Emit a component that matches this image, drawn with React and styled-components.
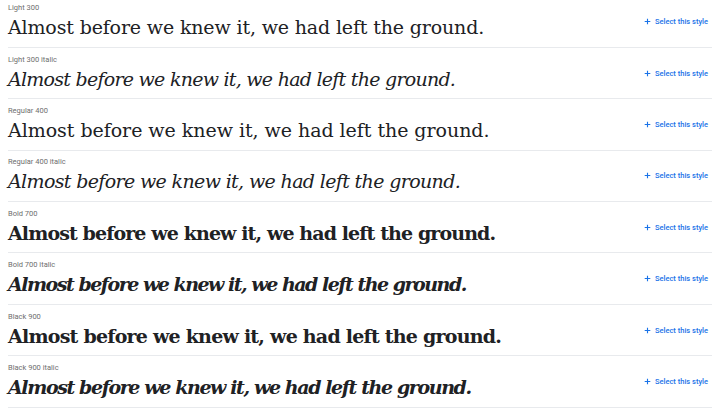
import React from 'react';
import styled, { createGlobalStyle } from 'styled-components';

const GlobalStyle = createGlobalStyle`
  body {
    margin: 0;
    background: #ffffff;
    font-family: Roboto, "Liberation Sans", sans-serif;
  }
`;

const List = styled.div`
  margin-top: -3.5px;
  padding: 0 8px;
`;

const Row = styled.div`
  display: flex;
  align-items: center;
  height: 51.4px;
  box-sizing: border-box;
  border-bottom: 1px solid #e8eaed;
`;

const Info = styled.div`
  flex: 1;
  min-width: 0;
  display: flex;
  flex-direction: column;
`;

const Label = styled.div`
  font-size: 7.5px;
  line-height: 10px;
  color: #6e6e6e;
  margin-bottom: 1px;
`;

const Sample = styled.div`
  font-family: "DejaVu Serif", "Liberation Serif", serif;
  font-size: 19px;
  line-height: 26px;
  color: #202124;
  white-space: nowrap;
  font-weight: ${(p) => (p.$weight >= 700 ? 700 : 400)};
  font-style: ${(p) => (p.$italic ? 'italic' : 'normal')};
  letter-spacing: ${(p) => p.$spacing}px;
`;

const SelectButton = styled.button`
  display: flex;
  align-items: center;
  gap: 4px;
  border: 0;
  background: none;
  padding: 0;
  margin-right: 4px;
  font-family: Roboto, "Liberation Sans", sans-serif;
  font-size: 7.5px;
  font-weight: 500;
  color: #1a73e8;
  cursor: pointer;
`;

const PlusIcon = () => (
  <svg width="7" height="7" viewBox="0 0 10 10">
    <path d="M5 1v8M1 5h8" stroke="#1a73e8" strokeWidth="1.6" fill="none" />
  </svg>
);

const styles = [
  { label: 'Light 300', weight: 300, spacing: -0.15 },
  { label: 'Light 300 italic', weight: 300, italic: true, spacing: -0.74 },
  { label: 'Regular 400', weight: 400, spacing: -0.04 },
  { label: 'Regular 400 italic', weight: 400, italic: true, spacing: -0.64 },
  { label: 'Bold 700', weight: 700, spacing: -0.89 },
  { label: 'Bold 700 italic', weight: 700, italic: true, spacing: -1.49 },
  { label: 'Black 900', weight: 900, spacing: -0.77 },
  { label: 'Black 900 italic', weight: 900, italic: true, spacing: -1.39 },
];

const App = () => (
  <>
    <GlobalStyle />
    <List>
      {styles.map((s) => (
        <Row key={s.label}>
          <Info>
            <Label>{s.label}</Label>
            <Sample $weight={s.weight} $italic={s.italic} $spacing={s.spacing}>
              Almost before we knew it, we had left the ground.
            </Sample>
          </Info>
          <SelectButton type="button">
            <PlusIcon />
            Select this style
          </SelectButton>
        </Row>
      ))}
    </List>
  </>
);

export default App;
